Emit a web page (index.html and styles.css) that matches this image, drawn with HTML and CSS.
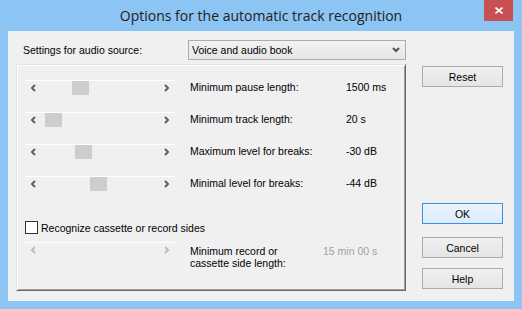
FILE: index.html
```html
<!DOCTYPE html>
<html lang="en">
<head>
    <meta charset="UTF-8">
    <title>Options for the automatic track recognition</title>
    <link rel="stylesheet" href="styles.css">
</head>
<body>
    <div class="window">
        <div class="titlebar">
            <span class="title">Options for the automatic track recognition</span>
            <button class="close" type="button">
                <svg width="8" height="7" viewBox="0 0 8 7"><path d="M0.5 0.5 L7.5 6.5 M7.5 0.5 L0.5 6.5" stroke="#fff" stroke-width="1.6" fill="none"/></svg>
            </button>
        </div>

        <div class="client">
            <div class="source-row">
                <label class="source-label">Settings for audio source:</label>
                <div class="combo">
                    <span>Voice and audio book</span>
                    <svg width="8" height="6" viewBox="0 0 8 6"><path d="M1 1 L4 4 L7 1" stroke="#505050" stroke-width="2" fill="none"/></svg>
                </div>
            </div>

            <div class="main">
                <div class="panel">
                    <div class="param-row">
                        <div class="slider">
                            <svg class="arrow left" width="6" height="8" viewBox="0 0 6 8"><path d="M5 1 L2 4 L5 7" stroke="currentColor" stroke-width="2" fill="none"/></svg>
                            <span class="thumb" style="left: 47px"></span>
                            <svg class="arrow right" width="6" height="8" viewBox="0 0 6 8"><path d="M1 1 L4 4 L1 7" stroke="currentColor" stroke-width="2" fill="none"/></svg>
                        </div>
                        <span class="param-label">Minimum pause length:</span>
                        <span class="param-value">1500 ms</span>
                    </div>
                    <div class="param-row">
                        <div class="slider">
                            <svg class="arrow left" width="6" height="8" viewBox="0 0 6 8"><path d="M5 1 L2 4 L5 7" stroke="currentColor" stroke-width="2" fill="none"/></svg>
                            <span class="thumb" style="left: 20px"></span>
                            <svg class="arrow right" width="6" height="8" viewBox="0 0 6 8"><path d="M1 1 L4 4 L1 7" stroke="currentColor" stroke-width="2" fill="none"/></svg>
                        </div>
                        <span class="param-label">Minimum track length:</span>
                        <span class="param-value">20 s</span>
                    </div>
                    <div class="param-row">
                        <div class="slider">
                            <svg class="arrow left" width="6" height="8" viewBox="0 0 6 8"><path d="M5 1 L2 4 L5 7" stroke="currentColor" stroke-width="2" fill="none"/></svg>
                            <span class="thumb" style="left: 50px"></span>
                            <svg class="arrow right" width="6" height="8" viewBox="0 0 6 8"><path d="M1 1 L4 4 L1 7" stroke="currentColor" stroke-width="2" fill="none"/></svg>
                        </div>
                        <span class="param-label">Maximum level for breaks:</span>
                        <span class="param-value">-30 dB</span>
                    </div>
                    <div class="param-row">
                        <div class="slider">
                            <svg class="arrow left" width="6" height="8" viewBox="0 0 6 8"><path d="M5 1 L2 4 L5 7" stroke="currentColor" stroke-width="2" fill="none"/></svg>
                            <span class="thumb" style="left: 65px"></span>
                            <svg class="arrow right" width="6" height="8" viewBox="0 0 6 8"><path d="M1 1 L4 4 L1 7" stroke="currentColor" stroke-width="2" fill="none"/></svg>
                        </div>
                        <span class="param-label">Minimal level for breaks:</span>
                        <span class="param-value">-44 dB</span>
                    </div>

                    <label class="check-row">
                        <span class="checkbox"></span>
                        Recognize cassette or record sides
                    </label>

                    <div class="param-row disabled">
                        <div class="slider">
                            <svg class="arrow left" width="6" height="8" viewBox="0 0 6 8"><path d="M5 1 L2 4 L5 7" stroke="currentColor" stroke-width="2" fill="none"/></svg>
                            <svg class="arrow right" width="6" height="8" viewBox="0 0 6 8"><path d="M1 1 L4 4 L1 7" stroke="currentColor" stroke-width="2" fill="none"/></svg>
                        </div>
                        <span class="param-label">Minimum record or<br>cassette side length:</span>
                        <span class="param-value">15 min 00 s</span>
                    </div>
                </div>

                <div class="buttons">
                    <button type="button" class="btn">Reset</button>
                    <button type="button" class="btn btn-default">OK</button>
                    <button type="button" class="btn btn-cancel">Cancel</button>
                    <button type="button" class="btn btn-help">Help</button>
                </div>
            </div>
        </div>
    </div>
</body>
</html>
```

FILE: styles.css
```css
* {
    margin: 0;
    padding: 0;
    box-sizing: border-box;
}

body {
    font-family: 'Liberation Sans', Arial, sans-serif;
    font-size: 10.5px;
    color: #000;
    background: #8cc4f3;
}

.window {
    width: 522px;
    height: 309px;
    background: #8cc4f3;
    padding: 0 8px 8px;
    display: flex;
    flex-direction: column;
}

.titlebar {
    height: 31px;
    position: relative;
    display: flex;
    align-items: center;
    justify-content: center;
}

.title {
    font-family: 'Open Sans', sans-serif;
    font-size: 14px;
    color: #222;
    margin-top: -1px;
}

.close {
    position: absolute;
    top: 0;
    right: 1px;
    width: 29px;
    height: 21px;
    border: none;
    background: #c75050;
    display: flex;
    align-items: center;
    justify-content: center;
}

.client {
    flex: 1;
    background: #f0f0f0;
    padding: 9px 0 0 8px;
}

.source-row {
    display: flex;
    align-items: center;
    height: 20px;
    margin-bottom: 4px;
}

.source-label {
    width: 172px;
    padding-left: 7px;
}

.combo {
    width: 218px;
    height: 20px;
    border: 1px solid #acacac;
    background: linear-gradient(#f2f2f2, #e6e6e6);
    display: flex;
    align-items: center;
    justify-content: space-between;
    padding: 0 5px 0 3px;
}

.main {
    display: flex;
    gap: 16px;
}

.panel {
    width: 390px;
    height: 227px;
    border: 1px solid;
    border-color: #e3e3e3 #696969 #696969 #e3e3e3;
    box-shadow: inset 1px 1px #fff, inset -1px -1px #a0a0a0;
    padding: 15px 0 0 8px;
    display: flex;
    flex-direction: column;
}

.param-row {
    display: grid;
    grid-template-columns: 165px 156px auto;
    height: 32px;
    line-height: 15px;
}

.slider {
    position: relative;
    width: 150px;
    height: 16px;
    border-top: 1px solid #fff;
    color: #606060;
}

.arrow {
    position: absolute;
    top: 3px;
}

.arrow.left {
    left: 5px;
}

.arrow.right {
    left: 139px;
}

.thumb {
    position: absolute;
    top: 0;
    width: 17px;
    height: 14px;
    background: #cdcdcd;
}

.check-row {
    display: flex;
    align-items: center;
    gap: 3px;
    height: 13px;
    margin-top: 13px;
}

.checkbox {
    width: 13px;
    height: 13px;
    border: 1px solid #333;
    background: #fff;
}

.param-row.disabled {
    margin-top: 8px;
    grid-template-columns: 165px 133px auto;
    line-height: 12px;
}

.param-row.disabled .slider {
    color: #bcbcbc;
}

.param-row.disabled .param-label {
    padding-top: 3px;
}

.param-row.disabled .param-value {
    padding-top: 3px;
    color: #a0a0a0;
}

.buttons {
    width: 81px;
    padding-top: 2px;
    display: flex;
    flex-direction: column;
}

.btn {
    height: 21px;
    border: 1px solid #acacac;
    background: linear-gradient(#f0f0f0, #e5e5e5);
    font-family: 'Liberation Sans', Arial, sans-serif;
    font-size: 10.5px;
    color: #000;
}

.btn-default {
    margin-top: 116px;
    border-color: #3c8ee8;
    background: linear-gradient(#ecf4fc, #dcecfc);
}

.btn-cancel {
    margin-top: 13px;
}

.btn-help {
    margin-top: 10px;
}
```
